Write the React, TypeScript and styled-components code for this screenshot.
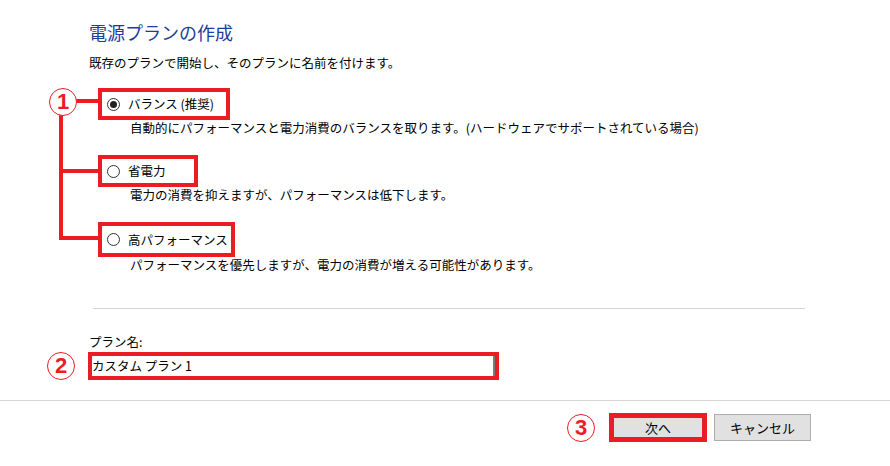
import React from "react";
import styled, { createGlobalStyle } from "styled-components";

const RED = "#ec1c24";
const FONT = `"Noto Sans CJK JP", "Noto Sans", sans-serif`;

const Global = createGlobalStyle`
  html, body { margin: 0; padding: 0; background: #ffffff; }
  body { font-family: ${FONT}; color: #000; }
  * { box-sizing: border-box; }
`;

const Page = styled.div`
  width: 890px;
  height: 466px;
  display: flex;
  flex-direction: column;
  background: #fff;
  overflow: hidden;
`;

const Header = styled.header`
  display: flex;
  flex-direction: column;
  gap: 11px;
  padding: 20px 0 0 89px;
`;

const Title = styled.h1`
  margin: 0;
  font-size: 18px;
  line-height: 24px;
  font-weight: 400;
  color: #1c3d9c;
`;

const Text = styled.p`
  margin: 0;
  font-size: 12.5px;
  line-height: 16px;
  color: #000;
  white-space: nowrap;
`;

const Options = styled.div`
  position: relative;
  display: flex;
  flex-direction: column;
  gap: 19px;
  margin-top: 17px;
  padding-left: 98px;
`;

const Option = styled.div`
  display: flex;
  flex-direction: column;
  align-items: flex-start;
`;

const LabelFrame = styled.label<{ $w: number; $h: number }>`
  display: flex;
  align-items: center;
  gap: 8px;
  width: ${(p) => p.$w}px;
  height: ${(p) => p.$h}px;
  padding-left: 5px;
  border: 4px solid ${RED};
  font-size: 12.5px;
  line-height: 16px;
  white-space: nowrap;
`;

const Radio = styled.span<{ $checked?: boolean }>`
  flex: none;
  width: 13px;
  height: 13px;
  border-radius: 50%;
  border: 1px solid #333;
  background: #fff;
  display: flex;
  align-items: center;
  justify-content: center;
  &::after {
    content: "";
    width: 7px;
    height: 7px;
    border-radius: 50%;
    background: ${(p) => (p.$checked ? "#222" : "transparent")};
  }
`;

const Desc = styled(Text)`
  margin-left: 32px;
`;

const Tree = styled.svg`
  position: absolute;
  left: 0;
  top: 0;
  overflow: visible;
`;

const Marker = styled.span`
  flex: none;
  width: 28px;
  height: 28px;
  border-radius: 50%;
  border: 1.5px solid ${RED};
  background: #fff;
  color: ${RED};
  font-family: "Liberation Sans", Arial, sans-serif;
  font-weight: 700;
  font-size: 22px;
  line-height: 1;
  display: flex;
  align-items: center;
  justify-content: center;
`;

const TreeMarker = styled(Marker)`
  position: absolute;
  left: 49px;
  top: 0px;
`;

const Divider = styled.hr`
  margin: 35px 85px 0 93px;
  border: none;
  height: 1px;
  background: #d4d4d4;
`;

const NameSection = styled.div`
  display: flex;
  flex-direction: column;
  gap: 2px;
  margin-top: 25px;
`;

const NameLabel = styled(Text)`
  padding-left: 89px;
`;

const NameRow = styled.div`
  display: flex;
  align-items: center;
  gap: 13px;
  padding-left: 47px;
`;

const InputFrame = styled.div`
  width: 411px;
  height: 28px;
  border: 4px solid ${RED};
  display: flex;
`;

const Field = styled.div`
  flex: 1;
  border-right: 2px solid #7a7a7a;
  font-size: 12.5px;
  line-height: 20px;
  white-space: nowrap;
`;

const Footer = styled.footer`
  margin-top: 20px;
  border-top: 1px solid #d4d4d4;
  display: flex;
  justify-content: flex-end;
  align-items: center;
  padding: 12px 79px 0 0;
`;

const NextGroup = styled.div`
  display: flex;
  align-items: center;
  gap: 14px;
  margin-right: 7px;
`;

const Button = styled.button<{ $framed?: boolean }>`
  width: ${(p) => (p.$framed ? 98 : 97)}px;
  height: ${(p) => (p.$framed ? 29 : 27)}px;
  margin: 0;
  padding: 0;
  background: #e1e1e1;
  border: ${(p) => (p.$framed ? `5px solid ${RED}` : "1px solid #adadad")};
  font-family: ${FONT};
  font-size: 13px;
  line-height: 16px;
  color: #000;
  display: flex;
  align-items: center;
  justify-content: center;
`;

export default function App() {
  return (
    <Page>
      <Global />
      <Header>
        <Title>電源プランの作成</Title>
        <Text>既存のプランで開始し、そのプランに名前を付けます。</Text>
      </Header>

      <Options>
        <Tree width="100" height="160" viewBox="0 0 100 160">
          <g stroke={RED} strokeWidth="4" fill="none">
            <line x1="75" y1="13" x2="99" y2="13" />
            <line x1="61" y1="25" x2="61" y2="152" />
            <line x1="59" y1="83" x2="99" y2="83" />
            <line x1="59" y1="150" x2="99" y2="150" />
          </g>
        </Tree>
        <TreeMarker>1</TreeMarker>

        <Option>
          <LabelFrame $w={132} $h={32}>
            <Radio $checked />
            バランス (推奨)
          </LabelFrame>
          <Desc>自動的にパフォーマンスと電力消費のバランスを取ります。(ハードウェアでサポートされている場合)</Desc>
        </Option>
        <Option>
          <LabelFrame $w={100} $h={32}>
            <Radio />
            省電力
          </LabelFrame>
          <Desc>電力の消費を抑えますが、パフォーマンスは低下します。</Desc>
        </Option>
        <Option>
          <LabelFrame $w={137} $h={35}>
            <Radio />
            高パフォーマンス
          </LabelFrame>
          <Desc>パフォーマンスを優先しますが、電力の消費が増える可能性があります。</Desc>
        </Option>
      </Options>

      <Divider />

      <NameSection>
        <NameLabel>プラン名:</NameLabel>
        <NameRow>
          <Marker>2</Marker>
          <InputFrame>
            <Field>カスタム プラン 1</Field>
          </InputFrame>
        </NameRow>
      </NameSection>

      <Footer>
        <NextGroup>
          <Marker>3</Marker>
          <Button $framed>次へ</Button>
        </NextGroup>
        <Button>キャンセル</Button>
      </Footer>
    </Page>
  );
}
